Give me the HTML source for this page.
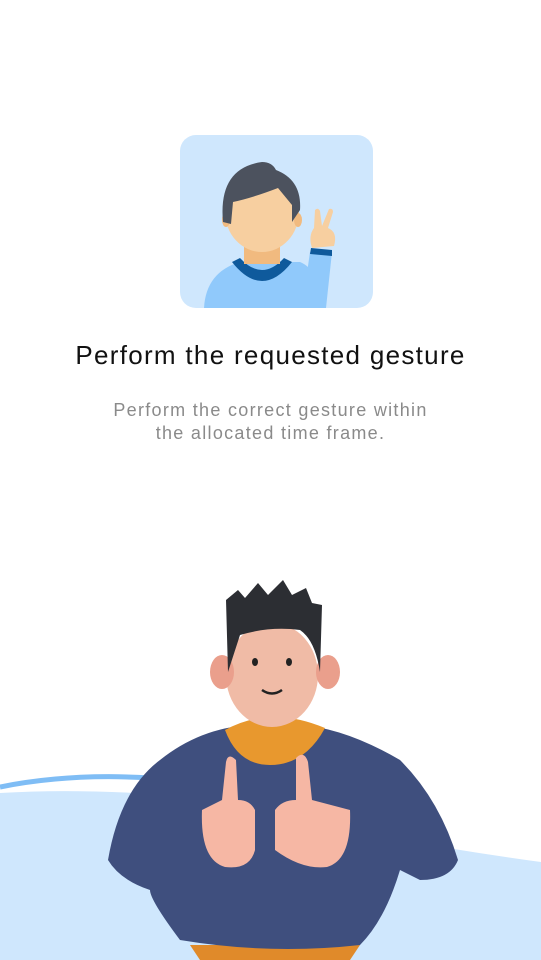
<!DOCTYPE html>
<html><head><meta charset="utf-8"><style>
html,body{margin:0;padding:0;background:#fff;}
body{width:541px;height:960px;position:relative;overflow:hidden;font-family:"Liberation Sans",sans-serif;}
.t{position:absolute;left:0;width:541px;text-align:center;}
</style></head><body>
<svg width="541" height="960" style="position:absolute;left:0;top:0">
<rect x="180" y="135" width="193" height="173" rx="16" fill="#cfe7fd"/>
<g>
<path d="M204 308 Q206 272 240 262 L300 262 Q320 270 322 308 Z" fill="#90c9fb"/>
<path d="M232 262 Q262 300 292 262 L284 258 Q262 282 240 258 Z" fill="#0f5a9c"/>
<rect x="244" y="238" width="36" height="26" fill="#f1ba7f"/>
<ellipse cx="262" cy="212" rx="37" ry="40" fill="#f7cfa0"/>
<ellipse cx="226" cy="220" rx="4" ry="7" fill="#f1ba7f"/>
<ellipse cx="298" cy="220" rx="4" ry="7" fill="#f1ba7f"/>
<path d="M223 222 Q218 168 262 162 Q272 162 276 170 Q302 180 300 210 L292 222 L292 205 L278 188 Q252 198 233 202 L231 224 Z" fill="#4c525e"/>
<path d="M302 308 L310 252 L332 252 L326 308 Z" fill="#90c9fb"/>
<path d="M310 254 L311 248 L332 250 L332 256 Z" fill="#0f5a9c"/>
<path d="M312 248 Q308 236 314 228 L315 210 Q318 207 320 211 L322 226 L329 209 Q333 208 333 212 L328 228 Q338 232 334 246 Z" fill="#f7cfa0"/>
</g>
<path d="M0 793 Q80 788 180 796 Q380 840 541 862 L541 960 L0 960 Z" fill="#cfe7fd"/>
<path d="M0 787 Q70 773 150 778" stroke="#7fbdf5" stroke-width="5" fill="none"/>
<path d="M190 945 L200 960 L350 960 L360 945 Z" fill="#e08a2a"/>
<path d="M160 760 Q200 728 250 725 L300 725 Q345 728 400 760 Q440 800 458 860 Q450 880 420 880 L400 870 Q385 920 360 945 Q270 955 180 940 Q150 900 150 890 Q120 880 108 860 Q120 790 160 760 Z" fill="#3f4f7e"/>
<path d="M225 730 Q270 705 325 728 Q305 765 270 765 Q238 765 225 730 Z" fill="#e8982e"/>
<ellipse cx="272" cy="675" rx="46" ry="52" fill="#f0bba6"/>
<ellipse cx="222" cy="672" rx="12" ry="17" fill="#ea9f8c"/>
<ellipse cx="328" cy="672" rx="12" ry="17" fill="#ea9f8c"/>
<path d="M228 672 L226 600 L238 590 L245 598 L258 583 L268 595 L283 580 L292 595 L306 588 L312 603 L322 605 L320 672 Q315 640 300 630 Q270 626 240 635 Z" fill="#2c2e33"/>
<path d="M262 690 Q272 697 282 690" stroke="#222" stroke-width="2.5" fill="none"/>
<ellipse cx="255" cy="662" rx="3" ry="4" fill="#222"/><ellipse cx="289" cy="662" rx="3" ry="4" fill="#222"/>
<path d="M202 810 Q200 860 225 867 Q250 870 255 850 L255 810 Q250 800 238 800 L236 760 Q228 752 226 762 L222 800 Z" fill="#f6b7a4"/>
<path d="M350 810 Q352 860 327 867 Q302 870 275 850 L275 810 Q282 800 296 800 L296 758 Q304 750 308 762 L312 800 Z" fill="#f6b7a4"/>
</svg>
<div class="t" style="top:340px;font-size:26px;letter-spacing:1.3px;color:#111;">Perform the requested gesture</div>
<div class="t" style="top:399px;font-size:18px;letter-spacing:1.3px;color:#8a8a8a;line-height:23px;">Perform the correct gesture within<br>the allocated time frame.</div>
</body></html>
